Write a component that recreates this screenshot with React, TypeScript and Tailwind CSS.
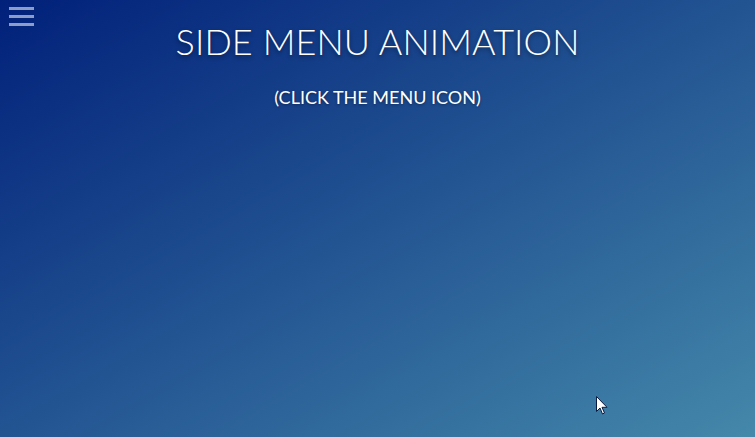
import React from "react";

export default function App() {
  return (
    <div className="relative w-[755px] h-[437px] overflow-hidden bg-[linear-gradient(to_bottom_right,#01207a,#4488aa)] font-['Lato','Open_Sans',sans-serif] text-white">
      <button className="absolute left-[9px] top-[7px] flex flex-col gap-[5px]" aria-label="menu">
        <span className="block w-[25px] h-[3px] bg-[#8c9dc9]" />
        <span className="block w-[25px] h-[3px] bg-[#8c9dc9]" />
        <span className="block w-[25px] h-[3px] bg-[#8c9dc9]" />
      </button>
      <div className="flex flex-col items-center pt-[18px]">
        <h1 className="text-[36px] leading-[46px] font-light tracking-[0.1px] [text-shadow:0_2px_4px_rgba(0,0,0,0.45)]">
          SIDE MENU ANIMATION
        </h1>
        <p className="mt-[22px] text-[18px] leading-[22px] font-normal [text-shadow:0_1px_3px_rgba(0,0,0,0.4)]">
          (CLICK THE MENU ICON)
        </p>
      </div>
      <svg className="absolute left-[596px] top-[396px]" width="12" height="19" viewBox="0 0 12 19">
        <path d="M0.5 0.5 L0.5 15.5 L4 12 L6.5 18 L8.5 17 L6 11.3 L11 11.3 Z" fill="#fff" stroke="#0a1a40" strokeWidth="1" />
      </svg>
    </div>
  );
}
